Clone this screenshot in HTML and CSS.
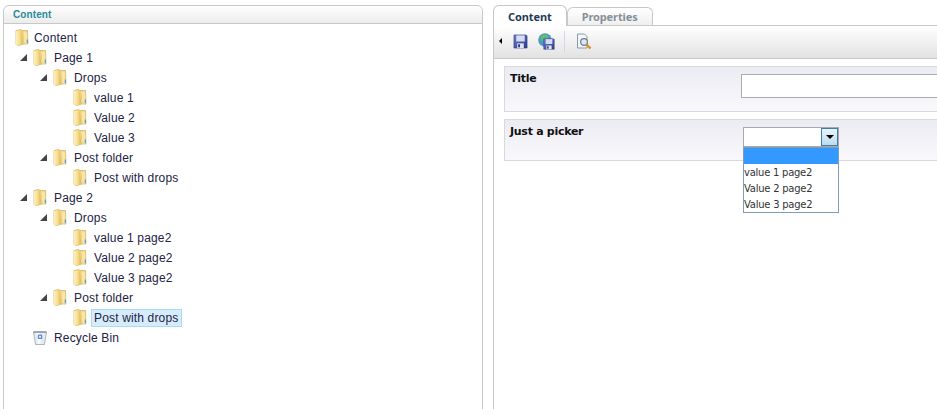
FILE: index.html
```html
<!DOCTYPE html>
<html>
<head>
<meta charset="utf-8">
<title>Content</title>
<link rel="stylesheet" href="styles.css">
</head>
<body>
<svg class="defs" width="0" height="0">
  <defs>
    <linearGradient id="fg" x1="0" x2="1" y1="0" y2="0">
      <stop offset="0" stop-color="#fdf0bd"/><stop offset="0.55" stop-color="#f6dc8c"/><stop offset="1" stop-color="#dcb558"/>
    </linearGradient>
    <linearGradient id="dk" x1="0" x2="1" y1="0" y2="1">
      <stop offset="0" stop-color="#6d7ecb"/><stop offset="1" stop-color="#2c3a8e"/>
    </linearGradient>
    <symbol id="folder" viewBox="0 0 14 17">
      <path d="M1 1.5 L6 .5 L7 1.5 L12.5 1.5 L13 15 L9 15 L3.5 16.5 L1 15.5Z" fill="#edcf7d" stroke="#d3b05a" stroke-width=".7"/>
      <path d="M1 2 L6.5 1 L8 14.5 L3 16.5 L1 15.5Z" fill="url(#fg)"/>
      <path d="M8.5 2.5 L12 2.5 L12.5 14.5 L9.5 14.5Z" fill="#f8e6a8"/>
      <path d="M11.7 10.5 h1.3 v3.5 h-1.3z" fill="#4fa3e0"/>
    </symbol>
    <symbol id="disk" viewBox="0 0 16 16">
      <path d="M1 1 H14 L15 2 V15 H1Z" fill="url(#dk)" stroke="#2b3680" stroke-width=".6"/>
      <rect x="3.5" y="1.5" width="9" height="6.5" fill="#d6dbf2"/>
      <rect x="4.5" y="10" width="7" height="5" fill="#e2e4ee"/>
      <rect x="5.5" y="11" width="2" height="3.2" fill="#2b3680"/>
    </symbol>
  </defs>
</svg>
<div class="page">
  <section class="tree-panel">
    <h2 class="panel-title">Content</h2>
    <ul class="tree">
      <li class="node lvl0"><svg class="folder"><use href="#folder"/></svg><span class="label">Content</span></li>
      <li class="node lvl1"><i class="arrow"></i><svg class="folder"><use href="#folder"/></svg><span class="label">Page 1</span></li>
      <li class="node lvl2"><i class="arrow"></i><svg class="folder"><use href="#folder"/></svg><span class="label">Drops</span></li>
      <li class="node lvl3"><svg class="folder"><use href="#folder"/></svg><span class="label">value 1</span></li>
      <li class="node lvl3"><svg class="folder"><use href="#folder"/></svg><span class="label">Value 2</span></li>
      <li class="node lvl3"><svg class="folder"><use href="#folder"/></svg><span class="label">Value 3</span></li>
      <li class="node lvl2"><i class="arrow"></i><svg class="folder"><use href="#folder"/></svg><span class="label">Post folder</span></li>
      <li class="node lvl3"><svg class="folder"><use href="#folder"/></svg><span class="label">Post with drops</span></li>
      <li class="node lvl1"><i class="arrow"></i><svg class="folder"><use href="#folder"/></svg><span class="label">Page 2</span></li>
      <li class="node lvl2"><i class="arrow"></i><svg class="folder"><use href="#folder"/></svg><span class="label">Drops</span></li>
      <li class="node lvl3"><svg class="folder"><use href="#folder"/></svg><span class="label">value 1 page2</span></li>
      <li class="node lvl3"><svg class="folder"><use href="#folder"/></svg><span class="label">Value 2 page2</span></li>
      <li class="node lvl3"><svg class="folder"><use href="#folder"/></svg><span class="label">Value 3 page2</span></li>
      <li class="node lvl2"><i class="arrow"></i><svg class="folder"><use href="#folder"/></svg><span class="label">Post folder</span></li>
      <li class="node lvl3"><svg class="folder"><use href="#folder"/></svg><span class="label selected">Post with drops</span></li>
      <li class="node lvl1">
        <svg class="folder" viewBox="0 0 14 17"><path d="M.5 3 H13.5 L11.5 15.5 H2.5Z" fill="#e6ebf1" stroke="#9aa4b0" stroke-width=".8"/><path d="M3.5 4 L5 14.5 H7.5 L7 4Z" fill="#fff"/><rect x="4.7" y="5.5" width="4.6" height="4.6" rx="1.2" fill="#5b8fe0"/><circle cx="7" cy="7.8" r="1" fill="#fff"/><path d="M.5 3 H13.5" stroke="#6f7986"/></svg>
        <span class="label">Recycle Bin</span>
      </li>
    </ul>
  </section>

  <section class="editor">
    <nav class="tabs">
      <span class="tab active">Content</span>
      <span class="tab">Properties</span>
    </nav>
    <div class="editor-body">
      <div class="toolbar">
        <i class="collapse"></i>
        <svg class="tool disk-tool"><use href="#disk"/></svg>
        <svg class="tool globe-tool" viewBox="0 0 17 17">
          <circle cx="7" cy="7" r="6.8" fill="#4b9ac8"/>
          <path d="M2.5 3 Q7 -.5 10.5 3 L8 8 L3 7.5Z" fill="#63bd6c"/>
          <g transform="translate(5 5) scale(.75)"><use href="#disk" width="16" height="16"/></g>
        </svg>
        <span class="sep"></span>
        <svg class="tool find-tool" viewBox="0 0 16 17">
          <path d="M1.5 1 H8.5 L11 3.5 V15 H1.5Z" fill="#f4f6fb" stroke="#8d98a8"/>
          <circle cx="8" cy="9" r="3.4" fill="#dce8f5" stroke="#6f7c8c" stroke-width="1.2"/>
          <path d="M10.5 11.5 L14.5 15.5" stroke="#df8a2b" stroke-width="2.4"/>
        </svg>
      </div>
      <div class="props">
        <div class="prop prop-title">
          <div class="prop-name">Title</div>
          <div class="prop-value"><div class="textbox"></div></div>
        </div>
        <div class="prop prop-picker">
          <div class="prop-name">Just a picker</div>
          <div class="prop-value">
            <div class="picker">
              <div class="combo"><span class="combo-btn"><i class="combo-arrow"></i></span></div>
              <ul class="listbox">
                <li class="option highlighted">&nbsp;</li>
                <li class="option">value 1 page2</li>
                <li class="option">Value 2 page2</li>
                <li class="option">Value 3 page2</li>
              </ul>
            </div>
          </div>
        </div>
      </div>
    </div>
  </section>
</div>
</body>
</html>
```
FILE: styles.css
```css
* { box-sizing: border-box; }
html, body { margin: 0; height: 409px; overflow: hidden; background: #fff; }
ul { list-style: none; margin: 0; padding: 0; }
.defs { position: absolute; }

.page {
  display: flex;
  height: 409px;
  padding: 5px 0 0 3px;
  overflow: hidden;
}

.tree-panel {
  flex: 0 0 480px;
  height: 420px;
  border: 1px solid #c8c8c8;
  border-radius: 6px 6px 0 0;
}
.panel-title {
  margin: 0;
  height: 18px;
  padding: 3px 0 0 9px;
  font: bold 10px/12px "Liberation Sans", sans-serif;
  letter-spacing: 0.1px;
  color: #2a8a9a;
  background: linear-gradient(#ffffff, #ececec);
  border-bottom: 1px solid #c8c8c8;
  border-radius: 6px 6px 0 0;
}
.tree {
  padding-top: 4px;
  font: 12px/20px "Liberation Sans", sans-serif;
  letter-spacing: 0.16px;
  color: #222244;
}
.node { display: flex; align-items: center; height: 20px; position: relative; }
.lvl0 { padding-left: 11px; }
.lvl1 { padding-left: 29px; }
.lvl2 { padding-left: 49px; }
.lvl3 { padding-left: 69px; }
.folder { width: 14px; height: 17px; flex: none; margin-top: -2px; }
.label { margin-left: 4px; padding: 0 2px; height: 18px; line-height: 17px; border: 1px solid transparent; }
.lvl0 .label { margin-left: 2px; }
.selected {
  background: #d6ecfb;
  border-color: #a8dcf2;
  margin-left: 4px;
  padding-right: 3px;
}
.arrow {
  position: absolute;
  margin-left: -13px;
  top: 6px;
  width: 0; height: 0;
  border-left: 7px solid transparent;
  border-bottom: 7px solid #444;
}

.editor {
  margin-left: 10px;
  flex: 1;
  min-width: 0;
  height: 420px;
  display: flex;
  flex-direction: column;
}
.tabs { display: flex; height: 20px; align-items: flex-end; }
.tab {
  font: bold 11px/16px "Noto Sans", sans-serif;
  letter-spacing: -0.1px;
  color: #84909b;
  height: 18px;
  padding: 1px 14px 0;
  border: 1px solid #c8c8c8;
  border-bottom: 0;
  border-radius: 6px 6px 0 0;
  background: linear-gradient(#fff, #efefef);
}
.tab.active {
  height: 21px;
  padding: 3px 14px 0;
  color: #1f3a55;
  background: #fff;
  position: relative;
  z-index: 1;
  margin-bottom: -1px;
}
.editor-body {
  flex: 1;
  border-left: 1px solid #c8c8c8;
  border-top: 1px solid #c8c8c8;
}
.toolbar {
  height: 33px;
  display: flex;
  align-items: center;
  padding: 0 0 2px 5px;
  background: linear-gradient(#ffffff, #e2e2e2);
  border-bottom: 1px solid #c8c8c8;
}
.collapse {
  width: 0; height: 0;
  border-top: 3px solid transparent;
  border-bottom: 3px solid transparent;
  border-right: 3px solid #000;
}
.tool { width: 16px; height: 17px; flex: none; }
.disk-tool { margin-left: 11px; width: 15px; height: 15px; }
.globe-tool { margin-left: 10px; width: 17px; }
.sep { width: 1px; height: 21px; background: #d4d6f0; margin-left: 9px; }
.find-tool { margin-left: 11px; }

.props { padding: 7px 0 0 10px; display: flex; flex-direction: column; gap: 7px; }
.prop {
  display: flex;
  border: 1px solid #d9d9d9;
  border-right: 0;
  background: linear-gradient(#ebebf3, #f9f9fc);
}
.prop-title { height: 46px; }
.prop-picker { height: 42px; }
.prop-name {
  flex: 0 0 236px;
  padding: 5px 0 0 5px;
  font: bold 11px/14px "DejaVu Sans", sans-serif;
  letter-spacing: -0.28px;
  color: #111;
}
.textbox {
  width: 300px;
  height: 24px;
  margin-top: 7px;
  background: #fff;
  border: 1px solid #ababab;
}
.picker { position: relative; width: 96px; margin: 7px 0 0 2px; }
.combo {
  height: 20px;
  background: #fff;
  border: 1px solid #a8a8b0;
  display: flex;
  justify-content: flex-end;
}
.combo-btn {
  width: 17px;
  height: 18px;
  border: 1px solid #3f7da6;
  background: linear-gradient(#eaf4fb, #bcdcf0);
  display: flex;
  align-items: center;
  justify-content: center;
}
.combo-arrow {
  width: 0; height: 0;
  border-left: 4px solid transparent;
  border-right: 4px solid transparent;
  border-top: 4px solid #000;
}
.listbox {
  position: absolute;
  top: 20px;
  left: 0;
  width: 96px;
  border: 1px solid #7f9db9;
  background: #fff;
  font: 10px/18px "DejaVu Sans", sans-serif;
  letter-spacing: -0.25px;
  color: #333;
}
.option { height: 16px; white-space: nowrap; }
.highlighted { background: #3399ff; }
```
